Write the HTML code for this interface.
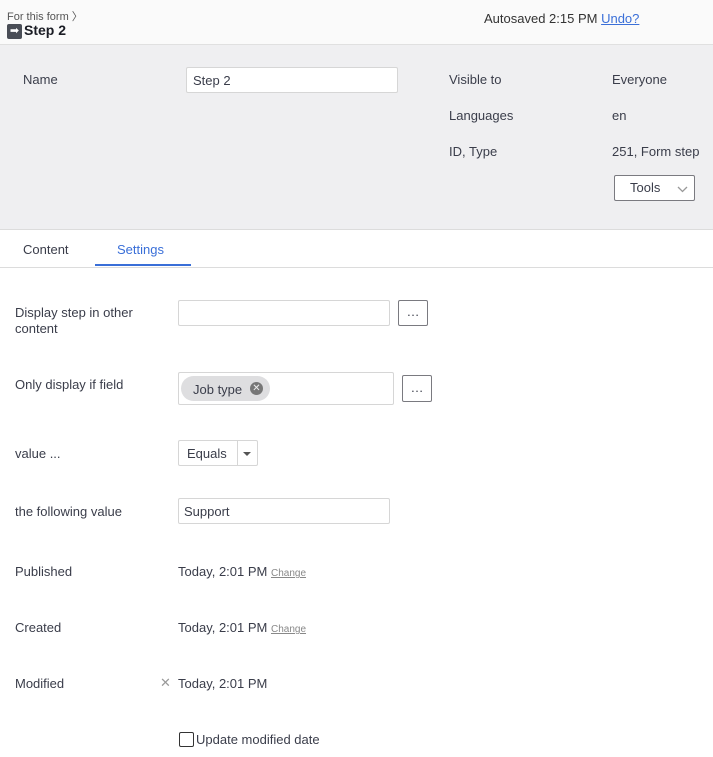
<!DOCTYPE html>
<html><head><meta charset="utf-8"><style>
*{box-sizing:border-box;margin:0;padding:0}
body{width:713px;height:757px;overflow:hidden;font-family:"Liberation Sans",sans-serif;font-size:13px;color:#3a3d4a;background:#fff;position:relative}
.a{position:absolute;white-space:nowrap}
.hdr{position:absolute;left:0;top:0;width:713px;height:45px;background:#fafafa;border-bottom:1px solid #e0e0e0}
.gray{position:absolute;left:0;top:45px;width:713px;height:185px;background:#efeff1;border-bottom:1px solid #dcdcdc}
.inp{position:absolute;background:#fff;border:1px solid #d6d6d6;border-radius:2px}
.btn{position:absolute;background:#fff;border:1px solid #7a7a80;border-radius:2px;text-align:center}
</style></head><body>
<div class="hdr"></div>
<div class="a" style="left:7px;top:8px;font-size:11px;color:#555">For this form 〉</div>
<div class="a" style="left:7px;top:24px;width:15px;height:15px;background:#4a4e57;border-radius:2px;color:#fff;font-size:11px;line-height:15px;text-align:center">➡</div>
<div class="a" style="left:24px;top:22px;font-weight:bold;font-size:14px;color:#1a1c24">Step 2</div>
<div class="a" style="left:484px;top:11px;font-size:13px;color:#333">Autosaved 2:15 PM <span style="color:#3a6fd8;text-decoration:underline">Undo?</span></div>

<div class="gray"></div>
<div class="a" style="left:23px;top:72px">Name</div>
<div class="inp" style="left:186px;top:67px;width:212px;height:26px"></div>
<div class="a" style="left:193px;top:73px">Step 2</div>
<div class="a" style="left:449px;top:72px">Visible to</div>
<div class="a" style="left:612px;top:72px">Everyone</div>
<div class="a" style="left:449px;top:108px">Languages</div>
<div class="a" style="left:612px;top:108px">en</div>
<div class="a" style="left:449px;top:144px">ID, Type</div>
<div class="a" style="left:612px;top:144px">251, Form step</div>
<div class="btn" style="left:614px;top:175px;width:81px;height:26px;text-align:left;padding-left:15px;line-height:24px;font-size:13px">Tools
<svg style="position:absolute;left:62px;top:10px" width="11" height="7" viewBox="0 0 11 7"><path d="M1 1L5.5 5.5L10 1" stroke="#999" stroke-width="1.3" fill="none"/></svg></div>

<div class="a" style="left:23px;top:242px">Content</div>
<div class="a" style="left:117px;top:242px;color:#3a6fd8">Settings</div>
<div class="a" style="left:95px;top:264px;width:96px;height:2px;background:#3a6fd8"></div>
<div class="a" style="left:0;top:267px;width:713px;height:1px;background:#dcdcdc"></div>

<div class="a" style="left:15px;top:305px;line-height:16px">Display step in other<br>content</div>
<div class="inp" style="left:178px;top:300px;width:212px;height:26px"></div>
<div class="btn" style="left:398px;top:300px;width:30px;height:26px;line-height:22px">…</div>

<div class="a" style="left:15px;top:377px">Only display if field</div>
<div class="inp" style="left:178px;top:372px;width:216px;height:33px"></div>
<div class="a" style="left:181px;top:376px;width:89px;height:25px;background:#dedee0;border-radius:13px"></div>
<div class="a" style="left:193px;top:382px">Job type</div>
<div class="a" style="left:250px;top:382px;width:13px;height:13px;border-radius:50%;background:#777;color:#eee;font-size:10px;line-height:13px;text-align:center">✕</div>
<div class="btn" style="left:402px;top:375px;width:30px;height:27px;line-height:24px">…</div>

<div class="a" style="left:15px;top:446px">value ...</div>
<div class="inp" style="left:178px;top:440px;width:80px;height:26px"></div>
<div class="a" style="left:237px;top:440px;width:1px;height:26px;background:#d6d6d6"></div>
<div class="a" style="left:187px;top:446px">Equals</div>
<div class="a" style="left:243px;top:452px;width:0;height:0;border-left:4px solid transparent;border-right:4px solid transparent;border-top:4px solid #555"></div>

<div class="a" style="left:15px;top:504px">the following value</div>
<div class="inp" style="left:178px;top:498px;width:212px;height:26px"></div>
<div class="a" style="left:184px;top:504px">Support</div>

<div class="a" style="left:15px;top:564px">Published</div>
<div class="a" style="left:178px;top:564px">Today, 2:01 PM <span style="font-size:10px;color:#888;text-decoration:underline">Change</span></div>
<div class="a" style="left:15px;top:620px">Created</div>
<div class="a" style="left:178px;top:620px">Today, 2:01 PM <span style="font-size:10px;color:#888;text-decoration:underline">Change</span></div>
<div class="a" style="left:15px;top:676px">Modified</div>
<div class="a" style="left:160px;top:675px;color:#999;font-size:13px">✕</div>
<div class="a" style="left:178px;top:676px">Today, 2:01 PM</div>
<div class="a" style="left:179px;top:732px;width:15px;height:15px;border:1px solid #333;border-radius:2px;background:#fff"></div>
<div class="a" style="left:196px;top:732px">Update modified date</div>
</body></html>
